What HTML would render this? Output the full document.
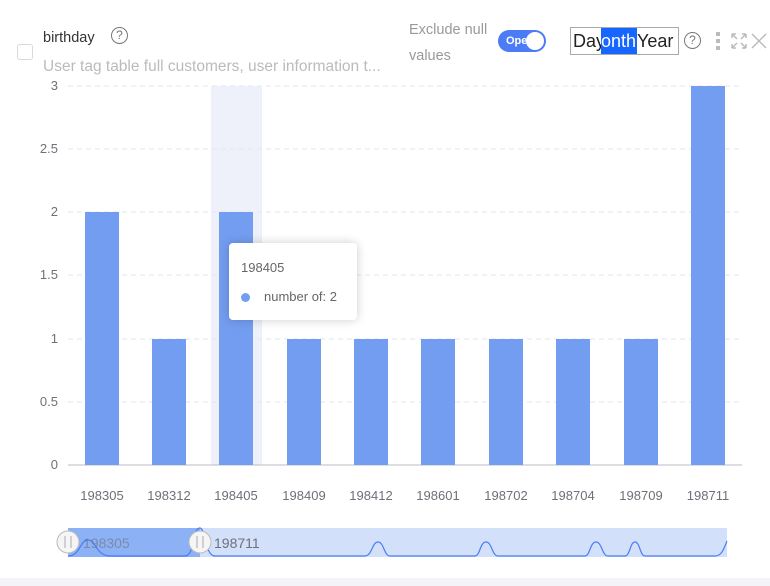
<!DOCTYPE html>
<html><head><style>
body{margin:0;width:770px;height:586px;background:#fff;font-family:"Liberation Sans",sans-serif;position:relative;overflow:hidden}
.a{position:absolute}
.yl{position:absolute;left:0;width:58px;text-align:right;font-size:13px;color:#6e7079}
.xl{position:absolute;top:488px;width:60px;text-align:center;font-size:13px;color:#6e7079}
.q{position:absolute;width:15px;height:15px;border:1.3px solid #777;border-radius:50%;font-size:12px;text-align:center;line-height:15px;color:#777}
</style></head><body>
<div class="a" style="left:17px;top:44px;width:14px;height:14px;border:1px solid #d9d9d9;border-radius:3px"></div>
<div class="a" style="left:43px;top:30px;font-size:14.5px;color:#333">birthday</div>
<div class="q" style="left:111px;top:27px">?</div>
<div class="a" style="left:43px;top:58px;font-size:15.5px;color:#bbb;white-space:nowrap">User tag table full customers, user information t...</div>
<div class="a" style="left:409px;top:17px;font-size:14.5px;color:#999;line-height:26px">Exclude null<br>values</div>
<div class="a" style="left:498px;top:30px;width:48px;height:22px;background:#4b7cf5;border-radius:11px"><span style="position:absolute;left:8px;top:5px;font-size:11px;color:#fff;font-weight:bold">Ope</span><div style="position:absolute;right:2px;top:2px;width:18px;height:18px;border-radius:50%;background:#fff"></div></div>
<div class="a" style="left:570px;top:27px;width:107px;height:26px;border:1px solid #aaa;font-size:18px;line-height:27px;color:#222;overflow:hidden;white-space:nowrap"><span style="padding-left:2px">Day</span><span style="background:#1766ff;color:#fff;display:inline-block;width:36px;margin-left:-4px">onth</span><span>Year</span></div>
<div class="q" style="left:684px;top:32px">?</div>
<div class="a" style="left:716px;top:32px;width:4px;height:18px;background:repeating-linear-gradient(#bbb 0 4px,transparent 4px 7px)"></div>
<svg class="a" style="left:730px;top:32px" width="40" height="18"><g stroke="#bbb" stroke-width="1.5" fill="none"><path d="M2 2l5 5M2 2h4M2 2v4M16 2l-5 5M16 2h-4M16 2v4M2 16l5-5M2 16h4M2 16v-4M16 16l-5-5M16 16h-4M16 16v-4"/><path d="M22 2l14 14M36 2L22 16"/></g></svg>
<svg class="a" style="left:0;top:0" width="770" height="586">
<rect x="211" y="86" width="51" height="379" fill="#eef1f9"/>
<g stroke="#e0e6f1" stroke-dasharray="5 4"><line x1="68" y1="86" x2="742" y2="86"/><line x1="68" y1="149" x2="742" y2="149"/><line x1="68" y1="212" x2="742" y2="212"/><line x1="68" y1="275" x2="742" y2="275"/><line x1="68" y1="339" x2="742" y2="339"/><line x1="68" y1="402" x2="742" y2="402"/></g>
<line x1="68" y1="465" x2="742" y2="465" stroke="#b8bcc5"/>
<g fill="#739df1">
<rect x="85" y="212" width="34" height="253"/><rect x="152" y="339" width="34" height="126"/><rect x="219" y="212" width="34" height="253"/><rect x="287" y="339" width="34" height="126"/><rect x="354" y="339" width="34" height="126"/><rect x="421" y="339" width="34" height="126"/><rect x="489" y="339" width="34" height="126"/><rect x="556" y="339" width="34" height="126"/><rect x="624" y="339" width="34" height="126"/><rect x="691" y="86" width="34" height="379"/></g>
<rect x="68" y="528" width="659" height="29" fill="#d2e0fa"/>
<rect x="68" y="528" width="132" height="29" fill="#8cb2f5"/>
<path d="M68 556 C80 556 80 540 88 540 C96 540 96 556 110 556 L185 556 C195 556 192 528 200 528 C205 528 205 556 215 556 L365 556 C372 556 372 542 378 542 C384 542 384 556 390 556 L475 556 C480 556 480 542 486 542 C492 542 492 556 498 556 L585 556 C590 556 590 542 596 542 C602 542 602 556 608 556 L625 556 C630 556 630 542 635 542 C640 542 640 556 645 556 L715 556 C722 556 724 548 727 541" fill="none" stroke="#4b7cf5" stroke-width="1.2"/>
<g fill="#f5f5f5" stroke="#bbb"><circle cx="68" cy="542" r="11"/><circle cx="200" cy="542" r="11"/></g>
<g stroke="#aaa"><line x1="65" y1="536" x2="65" y2="548"/><line x1="71" y1="536" x2="71" y2="548"/><line x1="197" y1="536" x2="197" y2="548"/><line x1="203" y1="536" x2="203" y2="548"/></g>
<text x="83" y="548" font-size="14" fill="#6e7079" opacity=".6" font-family="Liberation Sans">198305</text>
<text x="214" y="548" font-size="14" fill="#6e7079" font-family="Liberation Sans">198711</text>
<rect x="0" y="578" width="770" height="8" fill="#f4f4f8"/>
</svg>
<div class="yl" style="top:78px">3</div><div class="yl" style="top:141px">2.5</div><div class="yl" style="top:204px">2</div><div class="yl" style="top:267px">1.5</div><div class="yl" style="top:331px">1</div><div class="yl" style="top:394px">0.5</div><div class="yl" style="top:457px">0</div>
<div class="xl" style="left:72px">198305</div><div class="xl" style="left:139px">198312</div><div class="xl" style="left:206px">198405</div><div class="xl" style="left:274px">198409</div><div class="xl" style="left:341px">198412</div><div class="xl" style="left:408px">198601</div><div class="xl" style="left:476px">198702</div><div class="xl" style="left:543px">198704</div><div class="xl" style="left:611px">198709</div><div class="xl" style="left:678px">198711</div>
<div class="a" style="left:229px;top:243px;width:128px;height:77px;background:#fff;border-radius:4px;box-shadow:0 0 10px rgba(0,0,0,.2)">
<div style="position:absolute;left:12px;top:17px;font-size:13px;color:#666">198405</div>
<div style="position:absolute;left:12px;top:50px;width:9px;height:9px;border-radius:50%;background:#739df1"></div>
<div style="position:absolute;left:35px;top:46px;font-size:13px;color:#666">number of: 2</div>
</div>
</body></html>
